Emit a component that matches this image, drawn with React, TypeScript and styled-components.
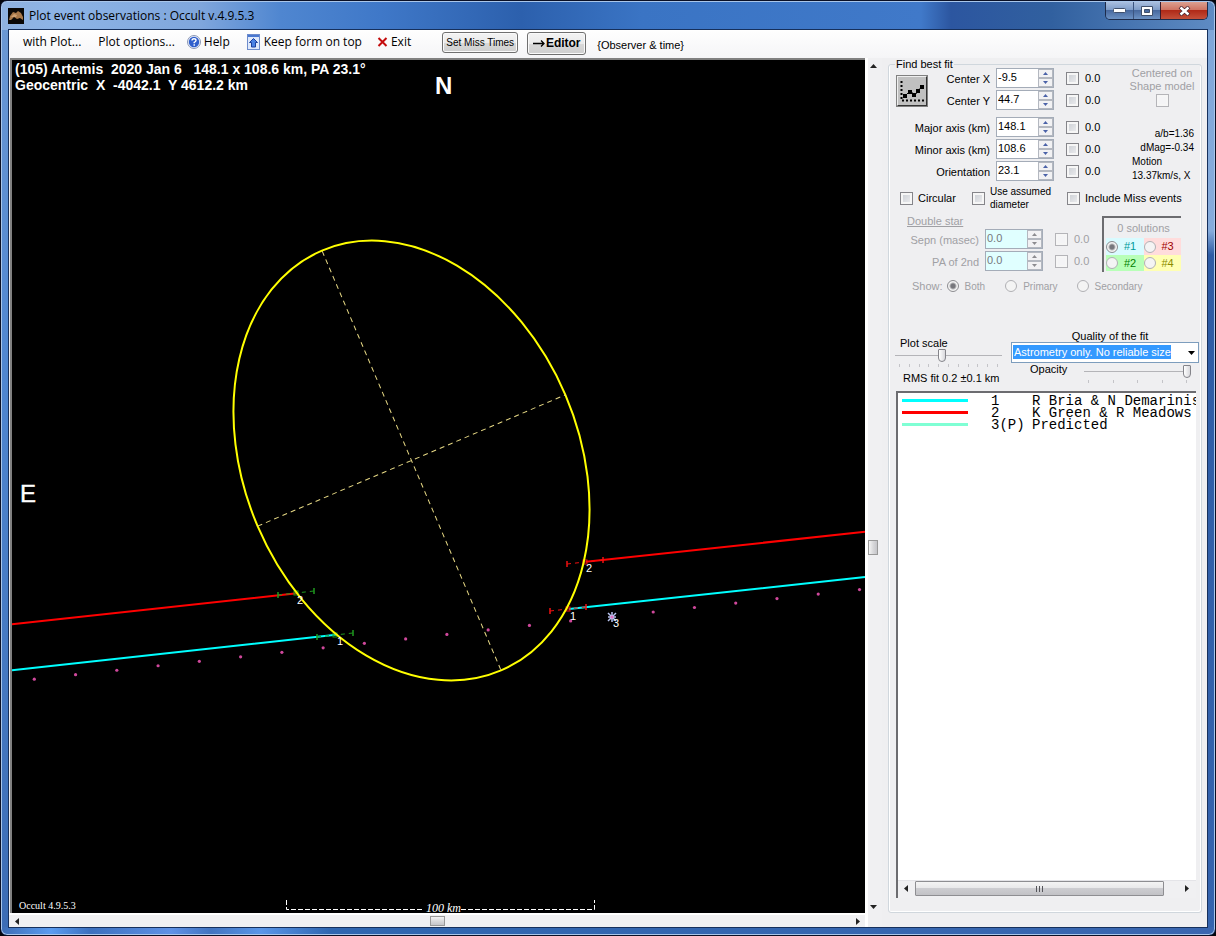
import React from "react";
import styled, { createGlobalStyle, css } from "styled-components";

const GlobalStyle = createGlobalStyle`
  * { box-sizing: border-box; }
  body {
    margin: 0;
    background: #05060c;
    color: #000;
    font: 11px/13px "Liberation Sans", Arial, sans-serif;
  }
  button, input, select { font: inherit; color: inherit; margin: 0; }
`;

/* ---------- window frame ---------- */

const Window = styled.div`
  display: flex;
  flex-direction: column;
  min-height: 100vh;
  padding: 1px 7px 7px;
  border: 1px solid #0a1026;
  border-radius: 7px;
  box-shadow: inset 0 0 0 1px #a9c6ea;
  background:
    linear-gradient(90deg, #8fb2e0 0, #8db4e6 60px, #7fa6dc 200px, #4f86d0 280px, #3f78c8 380px, #2c60ad 520px, #3a74c4 640px, #4079c9 920px, #2c56a0 950px, #31609f 1050px, #5f8cc4 100%) top / 100% 29px no-repeat,
    linear-gradient(90deg, #3c6cb4 0, #5b9cf0 50px, #3c70be 90px, #5f92e6 170px, #4274c0 210px, #5a96e8 260px, #2f66b0 330px, #3a66b0 100%) bottom / 100% 8px no-repeat,
    linear-gradient(180deg, #7fa6d8 0, #86acdc 230px, #2e5ca4 254px, #3564ae 100%) right / 8px 100% no-repeat,
    linear-gradient(180deg, #6d99d4 0, #4f86d0 40%, #3c6cb4 100%);
`;

const TitleBar = styled.header`
  display: flex;
  align-items: center;
  gap: 5px;
  height: 27px;
`;

const Title = styled.h1`
  flex: 1;
  margin: 0;
  font: 400 12px/16px "Open Sans", "Noto Sans", sans-serif;
`;

const Captions = styled.div`
  display: flex;
  align-self: flex-start;
  border: 1px solid #1d2b4a;
  border-top: 0;
  border-radius: 0 0 5px 5px;
  overflow: hidden;
`;

const CaptionButton = styled.button<{ $wide?: boolean; $danger?: boolean }>`
  display: grid;
  place-items: center;
  width: ${(p) => (p.$wide ? 47 : 27)}px;
  height: 17px;
  padding: 0;
  border: 0;
  border-left: 1px solid ${(p) => (p.$danger ? "#3a1c2c" : "#3c5580")};
  background: ${(p) =>
    p.$danger
      ? "linear-gradient(#dba091 0, #cf7463 45%, #b02a18 50%, #c4503a 100%)"
      : "linear-gradient(#a9bfdf 0, #7f9dc9 45%, #48699f 50%, #6c92c4 100%)"};
  &:first-child { border-left: 0; }
`;

const Client = styled.main`
  flex: 1;
  display: flex;
  flex-direction: column;
  border: 1px solid #16305c;
  background: #efeff1;
`;

/* ---------- tool bar ---------- */

const ToolBar = styled.nav`
  display: flex;
  align-items: flex-start;
  height: 28px;
  padding: 1px 14px 0;
  background: linear-gradient(#fefefe, #f5f5f7);
  border-top: 1px solid #fff;
`;

const MenuButton = styled.button<{ $gap: number }>`
  display: flex;
  align-items: center;
  gap: 3px;
  height: 20px;
  padding: 0;
  margin-right: ${(p) => p.$gap}px;
  border: 0;
  background: none;
  font: 12px/16px "Open Sans", "Noto Sans", sans-serif;
  white-space: nowrap;
`;

const PushButton = styled.button<{ $strong?: boolean }>`
  display: flex;
  align-items: center;
  justify-content: center;
  gap: 1px;
  width: ${(p) => (p.$strong ? 59 : 76)}px;
  height: ${(p) => (p.$strong ? 23 : 21)}px;
  margin-right: ${(p) => (p.$strong ? 11 : 9)}px;
  padding: 0;
  border: 1px solid #707070;
  border-radius: 3px;
  box-shadow: inset 0 0 0 1px #fafafa;
  background: linear-gradient(#f3f3f3 0, #ebebeb 50%, #d8d8d8 51%, #cfcfcf 100%);
  font-size: ${(p) => (p.$strong ? 12 : 10)}px;
  font-weight: ${(p) => (p.$strong ? 700 : 400)};
  white-space: nowrap;
`;

const ToolNote = styled.span`
  align-self: center;
  white-space: nowrap;
`;

/* ---------- plot ---------- */

const Body = styled.div`
  flex: 1;
  display: flex;
`;

const PlotColumn = styled.section`
  flex: 1;
  min-width: 0;
  display: flex;
  flex-direction: column;
`;

const PlotFrame = styled.div`
  position: relative;
  flex: 1;
  margin-left: 1px;
  border: 2px solid #808080;
  border-width: 2px 0 0 2px;
  background: #000;
  color: #fff;
`;

const PlotDrawing = styled.svg`
  position: absolute;
  inset: 0;
  width: 100%;
  height: 100%;
  overflow: visible;
`;

const PlotHeading = styled.p`
  position: relative;
  margin: 1px 3px;
  font-size: 14px;
  font-weight: 700;
  line-height: 16px;
  white-space: pre;
`;

const ScrollTrack = styled.div<{ $vertical?: boolean }>`
  display: flex;
  background: #f0f0f2;
  ${(p) =>
    p.$vertical
      ? css`
          flex-direction: column;
          align-items: flex-start;
          width: 17px;
          padding: 4px 0 17px;
          border-left: 3px solid #fff;
        `
      : css`
          align-items: center;
          height: 14px;
          padding: 0 4px;
          border-top: 2px solid #fff;
        `}
`;

const TrackSpace = styled.div<{ $grow: number }>`
  flex: ${(p) => p.$grow} 1 0;
`;

const ScrollArrow = styled.button<{ $vertical?: boolean }>`
  display: grid;
  place-items: center;
  width: ${(p) => (p.$vertical ? 11 : 7)}px;
  height: ${(p) => (p.$vertical ? 7 : 11)}px;
  padding: 0;
  border: 0;
  background: none;
`;

const ScrollThumb = styled.div<{ $vertical?: boolean }>`
  width: ${(p) => (p.$vertical ? 10 : 15)}px;
  height: ${(p) => (p.$vertical ? 15 : 10)}px;
  border: 1px solid #999;
  background: linear-gradient(${(p) => (p.$vertical ? "90deg" : "180deg")}, #f4f4f4, #d9d9db 50%, #c5c5c9);
`;

/* ---------- fit panel ---------- */

const FitPanel = styled.fieldset`
  display: flex;
  flex-direction: column;
  flex: none;
  width: 314px;
  min-width: 0;
  margin: 0 5px 14px 6px;
  padding: 0 5px 14px 6px;
  border: 1px solid #d0d7dd;
  border-radius: 3px;
  box-shadow: inset 1px 0 0 #fff, inset -1px -1px 0 #fff;
`;

const Legend = styled.legend`
  padding: 0 1px;
  font-size: 11px;
  line-height: 13px;
`;

const FitGrid = styled.div`
  display: grid;
  grid-template-columns: 33px 62px 58px 34px 1fr;
  grid-template-rows: 22px 22px 5px 22px 22px 22px;
  align-items: center;
  margin-top: -4px;
`;

const FitButton = styled.button`
  grid-column: 1;
  grid-row: 1 / 3;
  width: 32px;
  height: 32px;
  margin: 4px 0 0 1px;
  padding: 0;
  border: 2px solid;
  border-color: #eee #333 #333 #eee;
  outline: 1px solid #808080;
  outline-offset: -1px;
  background: #c0c0c0;
`;

const FieldLabel = styled.label<{ $row?: number; $muted?: boolean }>`
  grid-column: 1 / 3;
  ${(p) => (p.$row ? `grid-row: ${p.$row};` : "")}
  padding-top: 3px;
  text-align: right;
  color: ${(p) => (p.$muted ? "#a0a0a4" : "#000")};
  white-space: nowrap;
`;

const Spin = styled.div<{ $row?: number; $muted?: boolean }>`
  grid-column: 3;
  ${(p) => (p.$row ? `grid-row: ${p.$row};` : "")}
  display: flex;
  width: 58px;
  height: 20px;
  margin-left: 6px;
  border: 1px solid #a4acb8;
  background: ${(p) => (p.$muted ? "#e0ffff" : "#fff")};
  color: ${(p) => (p.$muted ? "#77777c" : "#000")};
`;

const SpinInput = styled.input`
  flex: 1;
  width: 0;
  padding: 0 0 2px 1px;
  border: 0;
  background: none;
  &:disabled { color: inherit; }
`;

const SpinButtons = styled.div`
  display: flex;
  flex-direction: column;
  width: 15px;
`;

const SpinButton = styled.button`
  flex: 1;
  display: grid;
  place-items: center;
  padding: 0;
  border: 1px solid #b4b8c0;
  background: #f2f2f4;
`;

const CheckLabel = styled.label<{ $muted?: boolean; $small?: boolean }>`
  display: flex;
  align-items: center;
  gap: 5px;
  color: ${(p) => (p.$muted ? "#a0a0a4" : "#000")};
  font-size: ${(p) => (p.$small ? 10 : 11)}px;
  white-space: nowrap;
`;

const GridCheck = styled(CheckLabel)<{ $row: number }>`
  grid-column: 4;
  grid-row: ${(p) => p.$row};
  gap: 6px;
  margin-left: 18px;
`;

const CheckBox = styled.input<{ $muted?: boolean }>`
  appearance: none;
  flex: none;
  width: 13px;
  height: 13px;
  border: 1px solid ${(p) => (p.$muted ? "#b4b4b8" : "#85858a")};
  box-shadow: inset 0 0 0 2px #f6f6f6;
  background: ${(p) => (p.$muted ? "#f4f4f6" : "linear-gradient(135deg, #c8ccd2, #f0f0f2)")};
`;

const FitFacts = styled.div`
  grid-column: 5;
  grid-row: 1 / -1;
  align-self: start;
  justify-self: end;
  display: flex;
  flex-direction: column;
  width: 66px;
  padding-right: 2px;
  font-size: 10px;
  white-space: nowrap;
`;

const ShapeLabel = styled.label`
  display: flex;
  flex-direction: column;
  align-items: center;
  gap: 1px;
  margin-bottom: 20px;
  color: #a0a0a4;
  font-size: 11px;
  text-align: center;
`;

const Fact = styled.span<{ $right?: boolean }>`
  padding-left: 2px;
  text-align: ${(p) => (p.$right ? "right" : "left")};
  & + & { margin-top: ${(p) => (p.$right ? 0 : 1)}px; }
`;

const OptionRow = styled.div`
  display: flex;
  gap: 16px;
  align-items: center;
  height: 26px;
  margin: 3px 0 3px 5px;
`;

const DoubleStar = styled.section`
  display: flex;
  align-items: flex-end;
  justify-content: space-between;
  padding: 0 15px 0 0;
  color: #a0a0a4;
`;

const DoubleGrid = styled.div`
  display: grid;
  grid-template-columns: 33px 51px 58px 52px;
  grid-template-rows: 14px 22px 22px;
  align-items: center;
`;

const DoubleTitle = styled.h2`
  grid-column: 1 / 5;
  margin: 0 0 0 12px;
  font-size: 11px;
  font-weight: 400;
  line-height: 13px;
  text-decoration: underline;
`;

const Solutions = styled.div`
  display: grid;
  grid-template-columns: 1fr 1fr;
  grid-template-rows: 20px 17px 16px;
  width: 79px;
  height: 56px;
  padding-left: 2px;
  border: 2px solid #6c6c70;
  border-width: 2px 0 0 2px;
  align-items: stretch;
`;

const SolutionCount = styled.span`
  grid-column: 1 / 3;
  align-self: center;
  text-align: center;
`;

const SolutionOption = styled.label<{ $bg: string; $ink: string }>`
  display: flex;
  align-items: center;
  gap: 6px;
  background: ${(p) => p.$bg};
  color: ${(p) => p.$ink};
`;

const Radio = styled.input`
  appearance: none;
  flex: none;
  width: 12px;
  height: 12px;
  border: 1px solid #b0b0b4;
  border-radius: 50%;
  background: #f4f4f4;
  &:checked {
    border-color: #8c8c90;
    background: radial-gradient(circle, #77777c 0 2px, #f4f4f4 4px);
  }
`;

const ShowRow = styled.div`
  display: flex;
  align-items: center;
  height: 14px;
  margin: 7px 0 0 17px;
  color: #a0a0a4;
`;

const ShowOption = styled.label<{ $gap: number }>`
  display: flex;
  align-items: center;
  gap: 6px;
  margin-left: ${(p) => p.$gap}px;
  font-size: 10px;
`;

const ScaleArea = styled.section`
  display: grid;
  grid-template-columns: 107px 1fr;
  column-gap: 9px;
  margin: 37px -3px 6px 0;
`;

const ScaleColumn = styled.div`
  display: flex;
  flex-direction: column;
  padding-top: 7px;
`;

const QualityColumn = styled.div`
  display: flex;
  flex-direction: column;
`;

const ScaleLabel = styled.label`
  padding-left: 5px;
  line-height: 12px;
`;

const QualityLabel = styled.label`
  padding-left: 10px;
  line-height: 12px;
  text-align: center;
`;

const Slider = styled.input`
  appearance: none;
  display: block;
  width: 100%;
  height: 13px;
  background: linear-gradient(#b4b4b8, #b4b4b8) center / 100% 1px no-repeat;
  &::-webkit-slider-thumb {
    appearance: none;
    width: 8px;
    height: 13px;
    border: 1px solid #84848a;
    border-radius: 1px 1px 4px 4px;
    background: linear-gradient(90deg, #fff, #d8d8dc);
  }
`;

const Ticks = styled.div`
  display: flex;
  justify-content: space-between;
  height: 6px;
  padding: 2px 4px 0;
`;

const Tick = styled.i`
  width: 1px;
  height: 3px;
  background: #c4c4c8;
`;

const RmsNote = styled.span`
  margin: 4px 0 0 8px;
  white-space: nowrap;
`;

const SelectBox = styled.div`
  position: relative;
  height: 21px;
  & > svg { position: absolute; right: 4px; top: 9px; pointer-events: none; }
`;

const QualitySelect = styled.select`
  appearance: none;
  width: 100%;
  height: 21px;
  padding: 0 0 1px 2px;
  border: 1px solid #7d9dbd;
  border-radius: 0;
  background: linear-gradient(#3399ff, #3399ff) 1px 2px / 158px 14px no-repeat #fff;
  color: #fff;
`;

const OpacityRow = styled.div`
  display: grid;
  grid-template-columns: 54px 107px;
  padding: 0 0 0 19px;
`;

const OpacitySlider = styled.div`
  padding-top: 2px;
`;

/* ---------- observer list ---------- */

const ListBox = styled.div`
  flex: 1;
  display: flex;
  flex-direction: column;
  margin: 0 0 0 1px;
  border: 2px solid #6c6c70;
  border-width: 2px 0 0 2px;
  background: #fff;
  overflow: hidden;
`;

const ObserverList = styled.ul`
  flex: 1;
  margin: 0;
  padding: 2px 0 0 4px;
  list-style: none;
  overflow: hidden;
`;

const Observer = styled.li`
  display: grid;
  grid-template-columns: 89px 41px 1fr;
  align-items: center;
  height: 12px;
  font: 14px/12px "Liberation Mono", "Courier New", monospace;
  white-space: nowrap;
`;

const Swatch = styled.span<{ $color: string }>`
  width: 66px;
  height: 3px;
  margin-bottom: 2px;
  background: ${(p) => p.$color};
`;

const ListScroll = styled.div`
  display: flex;
  align-items: center;
  gap: 6px;
  height: 18px;
  padding: 0 6px 2px 4px;
  border-top: 1px solid #e4e4e8;
  background: #f0f0f2;
`;

const ListThumb = styled.div`
  display: grid;
  place-items: center;
  width: 249px;
  height: 15px;
  margin-right: auto;
  border: 1px solid #8e8e92;
  border-radius: 1px;
  background: linear-gradient(#f4f4f4 0, #e8e8ea 48%, #cdcdd1 50%, #c2c2c6 100%);
`;

/* ---------- pieces ---------- */

type Dir = "up" | "down" | "left" | "right";

const arrowPaths: Record<Dir, string> = {
  up: "M0 4 L3.5 0 L7 4Z",
  down: "M0 0 L7 0 L3.5 4Z",
  left: "M4 0 L4 7 L0 3.5Z",
  right: "M0 0 L4 3.5 L0 7Z",
};

const Arrow = ({ dir, color = "#222", size = 7 }: { dir: Dir; color?: string; size?: number }) => {
  const tall = dir === "left" || dir === "right";
  const short = Math.round((size * 4) / 7);
  return (
    <svg width={tall ? short : size} height={tall ? size : short} viewBox={tall ? "0 0 4 7" : "0 0 7 4"} aria-hidden="true">
      <path d={arrowPaths[dir]} fill={color} />
    </svg>
  );
};

const SpinBox = ({ id, value, row, muted }: { id: string; value: string; row: number; muted?: boolean }) => (
  <Spin $row={row} $muted={muted}>
    <SpinInput id={id} defaultValue={value} disabled={muted} />
    <SpinButtons>
      <SpinButton aria-label="Increase" disabled={muted}>
        <Arrow dir="up" size={5} color={muted ? "#8c8c90" : "#4a62a8"} />
      </SpinButton>
      <SpinButton aria-label="Decrease" disabled={muted}>
        <Arrow dir="down" size={5} color={muted ? "#8c8c90" : "#4a62a8"} />
      </SpinButton>
    </SpinButtons>
  </Spin>
);

const fitFields = [
  { id: "center-x", label: "Center X", value: "-9.5", row: 1 },
  { id: "center-y", label: "Center Y", value: "44.7", row: 2 },
  { id: "major", label: "Major axis (km)", value: "148.1", row: 4 },
  { id: "minor", label: "Minor axis (km)", value: "108.6", row: 5 },
  { id: "orientation", label: "Orientation", value: "23.1", row: 6 },
];

const doubleFields = [
  { id: "sepn", label: "Sepn (masec)", row: 2 },
  { id: "pa2", label: "PA of 2nd", row: 3 },
];

const solutions = [
  { name: "#1", bg: "#d9fbff", ink: "#009a9a" },
  { name: "#3", bg: "#ffdcdc", ink: "#a00000" },
  { name: "#2", bg: "#b8ffb8", ink: "#008000" },
  { name: "#4", bg: "#ffffb4", ink: "#8c8c00" },
];

const observers = [
  { no: "1", name: "R Bria & N Demarinis", color: "#00ffff" },
  { no: "2", name: "K Green & R Meadows", color: "#ff0000" },
  { no: "3(P)", name: "Predicted", color: "#7fffd4" },
];

const dots = Array.from({ length: 21 }, (_, i) => ({ x: 34.3 + i * 41.26, y: 679.2 - i * 4.48 }));

const ErrorBar = ({ x, y, color }: { x: number; y: number; color: string }) => (
  <g stroke={color} fill="none">
    <path d={`M${x - 18} ${y + 2} L${x + 18} ${y - 2}`} strokeDasharray="4 4" />
    <path d={`M${x - 18} ${y - 1} v6 M${x + 18} ${y - 5} v6`} strokeWidth="1.5" />
    <rect x={x - 2} y={y - 2} width="4" height="4" />
  </g>
);

const Plot = () => (
  <PlotDrawing viewBox="12 60 853 853" preserveAspectRatio="xMinYMin meet" role="img" aria-label="Chord plot">
    <g strokeWidth="2" fill="none">
      <path d="M12 624.3 L297 593.3 M586 561.8 L865 531.8" stroke="#ff0000" />
      <path d="M12 670.3 L336 634.7 M569 609 L865 577" stroke="#00ffff" />
    </g>
    {dots.map((d) => (
      <circle key={d.x} cx={d.x} cy={d.y} r="1.6" fill="#d0489c" />
    ))}
    <ErrorBar x={296} y={593} color="#1f9a1f" />
    <ErrorBar x={335} y={635} color="#1f9a1f" />
    <ErrorBar x={585} y={562} color="#f01010" />
    <ErrorBar x={568} y={609} color="#f01010" />
    <g transform="rotate(-23.1 411.5 460.5)" fill="none">
      <ellipse cx="411.5" cy="460.5" rx="167.3" ry="228.2" stroke="#ffff00" strokeWidth="2" />
      <path d="M411.5 232.9 V688.1 M244.2 460.5 H578.8" stroke="#e6d884" strokeDasharray="5 4" />
    </g>
    <path d="M608 613 l8 8 M616 613 l-8 8 M612 612 v10 M608 617 h8" stroke="#b9c4f0" strokeWidth="1.5" />
    <circle cx="612" cy="617" r="1.6" fill="#e070c0" />
    <g fill="#fff" fontFamily="Liberation Sans, Arial, sans-serif" fontSize="11">
      <text x="297" y="604">2</text>
      <text x="337" y="645">1</text>
      <text x="586" y="572">2</text>
      <text x="570" y="620">1</text>
      <text x="613" y="627">3</text>
    </g>
    <g fill="#fff" fontFamily="Liberation Sans, Arial, sans-serif">
      <text x="435" y="94" fontSize="24" fontWeight="700">N</text>
      <text x="20" y="502" fontSize="24" stroke="#fff" strokeWidth=".4">E</text>
    </g>
    <path d="M286.5 900 V909.5 H422 M461 909.5 H594.5 V900" stroke="#fff" strokeDasharray="5 2" fill="none" />
    <g fill="#fff" fontFamily="Liberation Serif, Times New Roman, serif">
      <text x="19" y="909" fontSize="10">Occult 4.9.5.3</text>
      <text x="426" y="912" fontSize="12" fontStyle="italic">100 km</text>
    </g>
  </PlotDrawing>
);

export default function App() {
  return (
    <>
      <GlobalStyle />
      <Window>
        <TitleBar>
          <svg width="16" height="16" viewBox="0 0 16 16" aria-hidden="true">
            <rect width="16" height="16" fill="#0a0806" />
            <path d="M1 12 L2 8 L5 4 L8 5 L10 3 L13 5 L15 9 L15 12 L12 10 L9 11 L6 9 L3 12Z" fill="#a9794a" />
            <path d="M3 9 L6 6 L9 7 L8 9Z" fill="#cfa070" />
          </svg>
          <Title>Plot event observations : Occult v.4.9.5.3</Title>
          <Captions>
            <CaptionButton aria-label="Minimize">
              <svg width="13" height="5" viewBox="0 0 13 5"><rect x=".5" y=".5" width="12" height="4" rx="1" fill="#fff" stroke="#40506c" /></svg>
            </CaptionButton>
            <CaptionButton aria-label="Maximize">
              <svg width="12" height="10" viewBox="0 0 12 10"><path d="M.5 .5 H11.5 V9.5 H.5Z M3.500 3.500 V6.500 H8.500 V3.500Z" fill="#fff" fillRule="evenodd" stroke="#40506c" /></svg>
            </CaptionButton>
            <CaptionButton $wide $danger aria-label="Close">
              <svg width="13" height="10" viewBox="0 0 13 10">
                <path d="M2 1 L11 9 M11 1 L2 9" stroke="#4a2430" strokeWidth="4" />
                <path d="M2.500 1.500 L10.500 8.500 M10.500 1.500 L2.500 8.500" stroke="#fff" strokeWidth="2.500" />
              </svg>
            </CaptionButton>
          </Captions>
        </TitleBar>

        <Client>
          <ToolBar>
            <MenuButton $gap={17}>with Plot...</MenuButton>
            <MenuButton $gap={12}>Plot options...</MenuButton>
            <MenuButton $gap={17}>
              <svg width="14" height="14" viewBox="0 0 14 14" aria-hidden="true">
                <circle cx="7" cy="7" r="6.500" fill="#e8eefc" stroke="#8c98b4" />
                <circle cx="7" cy="7" r="5.200" fill="#2f5fcc" />
                <path d="M5 5.600 Q5 3.800 7 3.800 Q9 3.800 9 5.400 Q9 6.400 7.200 7.400 V8.300 M7.200 9.300 V10.800" stroke="#fff" strokeWidth="1.400" fill="none" />
              </svg>
              Help
            </MenuButton>
            <MenuButton $gap={15}>
              <svg width="14" height="16" viewBox="0 0 14 16" aria-hidden="true">
                <rect x=".5" y=".5" width="12" height="15" fill="#dfe9fb" stroke="#6d8ccc" />
                <rect x="1" y="1" width="11" height="2" fill="#4a78d0" />
                <path d="M6.500 4.500 L10.500 8.500 H8.500 V13 H4.500 V8.500 H2.500Z" fill="#4a82e4" stroke="#1c3f9c" />
              </svg>
              Keep form on top
            </MenuButton>
            <MenuButton $gap={31}>
              <svg width="11" height="10" viewBox="0 0 11 10" aria-hidden="true">
                <path d="M1.500 1 L9.500 9 M9.500 1 L1.500 9" stroke="#c40c0c" strokeWidth="2" />
              </svg>
              Exit
            </MenuButton>
            <PushButton>Set Miss Times</PushButton>
            <PushButton $strong>
              <svg width="12" height="7" viewBox="0 0 12 7" aria-hidden="true">
                <path d="M0 3.500 H11 M8 .5 L11 3.500 L8 6.500" stroke="#000" strokeWidth="1.300" fill="none" />
              </svg>
              Editor
            </PushButton>
            <ToolNote>{"{Observer & time}"}</ToolNote>
          </ToolBar>

          <Body>
            <PlotColumn>
              <PlotFrame>
                <Plot />
                <PlotHeading>{"(105) Artemis  2020 Jan 6   148.1 x 108.6 km, PA 23.1°\nGeocentric  X  -4042.1  Y 4612.2 km"}</PlotHeading>
              </PlotFrame>
              <ScrollTrack>
                <ScrollArrow aria-label="Scroll left"><Arrow dir="left" /></ScrollArrow>
                <TrackSpace $grow={50} />
                <ScrollThumb />
                <TrackSpace $grow={50} />
                <ScrollArrow aria-label="Scroll right"><Arrow dir="right" /></ScrollArrow>
              </ScrollTrack>
            </PlotColumn>
            <ScrollTrack $vertical>
              <ScrollArrow $vertical aria-label="Scroll up"><Arrow dir="up" /></ScrollArrow>
              <TrackSpace $grow={115} />
              <ScrollThumb $vertical />
              <TrackSpace $grow={85} />
              <ScrollArrow $vertical aria-label="Scroll down"><Arrow dir="down" /></ScrollArrow>
            </ScrollTrack>

            <FitPanel>
              <Legend>Find best fit</Legend>
              <FitGrid>
                <FitButton aria-label="Find best fit">
                  <svg width="28" height="28" viewBox="0 0 28 28" aria-hidden="true">
                    <path d="M3.500 4 V24" stroke="#000" strokeWidth="2" strokeDasharray="2 2" />
                    <path d="M4 23.500 H26" stroke="#000" strokeWidth="2" strokeDasharray="2 2" />
                    <path d="M7 19 L12 14 L17 18 L24 9" stroke="#000" fill="none" />
                    <path d="M5 17h4v4h-4z M10 13h4v4h-4z M14 16h4v4h-4z M18 12h4v4h-4z M22 8h4v4h-4z" />
                  </svg>
                </FitButton>
                {fitFields.map((f) => (
                  <React.Fragment key={f.id}>
                    <FieldLabel htmlFor={f.id} $row={f.row}>{f.label}</FieldLabel>
                    <SpinBox id={f.id} value={f.value} row={f.row} />
                    <GridCheck $row={f.row}>
                      <CheckBox type="checkbox" />0.0
                    </GridCheck>
                  </React.Fragment>
                ))}
                <FitFacts>
                  <ShapeLabel>
                    <span>Centered on<br />Shape model</span>
                    <CheckBox type="checkbox" $muted disabled />
                  </ShapeLabel>
                  <Fact $right>a/b=1.36</Fact>
                  <Fact $right>dMag=-0.34</Fact>
                  <Fact>Motion</Fact>
                  <Fact>13.37km/s, X</Fact>
                </FitFacts>
              </FitGrid>

              <OptionRow>
                <CheckLabel><CheckBox type="checkbox" />Circular</CheckLabel>
                <CheckLabel $small><CheckBox type="checkbox" /><span>Use assumed<br />diameter</span></CheckLabel>
                <CheckLabel><CheckBox type="checkbox" />Include Miss events</CheckLabel>
              </OptionRow>

              <DoubleStar>
                <DoubleGrid>
                  <DoubleTitle>Double star</DoubleTitle>
                  {doubleFields.map((f) => (
                    <React.Fragment key={f.id}>
                      <FieldLabel htmlFor={f.id} $row={f.row} $muted>{f.label}</FieldLabel>
                      <SpinBox id={f.id} value="0.0" row={f.row} muted />
                      <GridCheck $row={f.row} $muted>
                        <CheckBox type="checkbox" $muted disabled />0.0
                      </GridCheck>
                    </React.Fragment>
                  ))}
                </DoubleGrid>
                <Solutions>
                  <SolutionCount>0 solutions</SolutionCount>
                  {solutions.map((s, i) => (
                    <SolutionOption key={s.name} $bg={s.bg} $ink={s.ink}>
                      <Radio type="radio" name="solution" defaultChecked={i === 0} disabled />
                      {s.name}
                    </SolutionOption>
                  ))}
                </Solutions>
              </DoubleStar>

              <ShowRow>
                Show:
                <ShowOption $gap={4}><Radio type="radio" name="show" defaultChecked disabled />Both</ShowOption>
                <ShowOption $gap={20}><Radio type="radio" name="show" disabled />Primary</ShowOption>
                <ShowOption $gap={19}><Radio type="radio" name="show" disabled />Secondary</ShowOption>
              </ShowRow>

              <ScaleArea>
                <ScaleColumn>
                  <ScaleLabel htmlFor="plot-scale">Plot scale</ScaleLabel>
                  <Slider id="plot-scale" type="range" min="0" max="100" defaultValue="43" />
                  <Ticks>{Array.from({ length: 11 }, (_, i) => <Tick key={i} />)}</Ticks>
                  <RmsNote>RMS fit 0.2 ±0.1 km</RmsNote>
                </ScaleColumn>
                <QualityColumn>
                  <QualityLabel htmlFor="quality">Quality of the fit</QualityLabel>
                  <SelectBox>
                    <QualitySelect id="quality">
                      <option>Astrometry only. No reliable size</option>
                    </QualitySelect>
                    <Arrow dir="down" color="#000" />
                  </SelectBox>
                  <OpacityRow>
                    <label htmlFor="opacity">Opacity</label>
                    <OpacitySlider>
                      <Slider id="opacity" type="range" min="0" max="100" defaultValue="100" />
                      <Ticks>{Array.from({ length: 5 }, (_, i) => <Tick key={i} />)}</Ticks>
                    </OpacitySlider>
                  </OpacityRow>
                </QualityColumn>
              </ScaleArea>

              <ListBox>
                <ObserverList>
                  {observers.map((o) => (
                    <Observer key={o.no}>
                      <Swatch $color={o.color} />
                      <span>{o.no}</span>
                      <span>{o.name}</span>
                    </Observer>
                  ))}
                </ObserverList>
                <ListScroll>
                  <ScrollArrow aria-label="Scroll list left"><Arrow dir="left" /></ScrollArrow>
                  <ListThumb>
                    <svg width="8" height="6" viewBox="0 0 8 6" aria-hidden="true">
                      <path d="M.5 0V6 M3.500 0V6 M6.500 0V6" stroke="#55555a" />
                    </svg>
                  </ListThumb>
                  <ScrollArrow aria-label="Scroll list right"><Arrow dir="right" /></ScrollArrow>
                </ListScroll>
              </ListBox>
            </FitPanel>
          </Body>
        </Client>
      </Window>
    </>
  );
}
